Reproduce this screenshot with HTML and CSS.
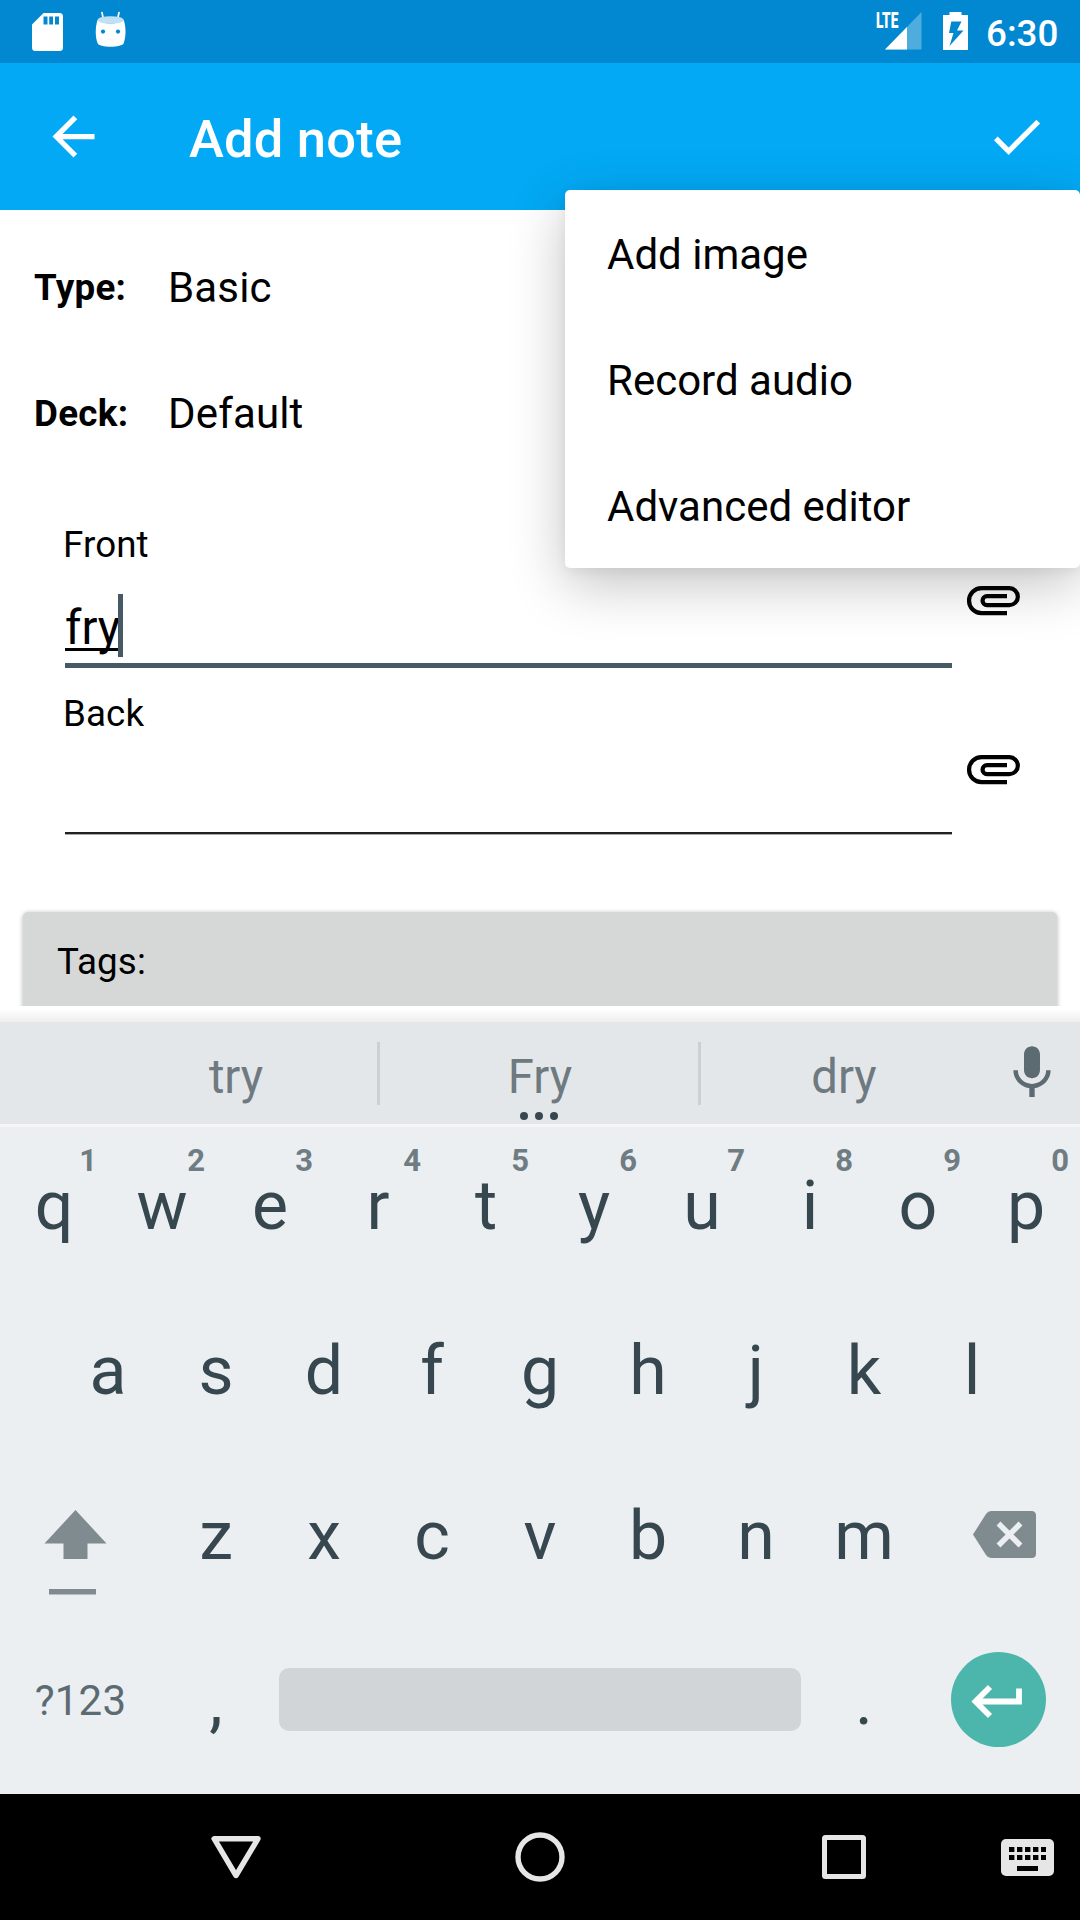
FILE: index.html
```html
<!DOCTYPE html>
<html lang="en">
<head>
<meta charset="utf-8">
<title>Add note</title>
<link rel="stylesheet" href="styles.css">
</head>
<body>
<div class="screen">
  <header class="status">
    <svg class="status-sd" width="31" height="38" viewBox="0 0 31 38"><path fill="#fff" fill-rule="evenodd" d="M11.500 0H27.500a3.500 3.500 0 0 1 3.500 3.500V34.500a3.500 3.500 0 0 1-3.500 3.500H3.500A3.500 3.500 0 0 1 0 34.500V11.500ZM11.500 3.500V11.500H15.500V3.500ZM17.200 3.500V11.500H21V3.500ZM23 3.500V11.500H27V3.500Z"/></svg>
    <svg class="status-droid" width="32" height="38" viewBox="0 0 32 38"><path d="M7 1.500 8.300 8M24 1.500 22.700 8" stroke="#fff" stroke-width="1.700" stroke-linecap="round"/><path fill="#fff" d="M2.500 9C9 13.500 22 13.500 28.800 9C31 16 31.200 25 28.800 32C27.500 37 3.800 37 2.500 32C.1 25 .3 16 2.500 9Z"/><ellipse cx="15.600" cy="9" rx="13" ry="3.800" fill="#c0e1f3"/><circle cx="8" cy="20.600" r="2.100" fill="#0288d1"/><circle cx="23" cy="20.600" r="2.100" fill="#0288d1"/></svg>
    <div class="network">
      <svg width="46" height="38" viewBox="0 0 46 38"><path fill="#4eacdf" d="M45.500 0V37.500H9Z"/><path fill="#fff" d="M31 15V37.500H9Z"/></svg>
      <span class="network-type">LTE</span>
    </div>
    <svg width="25" height="38" viewBox="0 0 25 38"><path fill="#fff" fill-rule="evenodd" d="M6.500 0H18.500V3H25V38H0V3H6.500ZM8.300 9.500 6 21H10.500L6.500 34 20.500 18.500H14L18.500 9.500Z"/></svg>
    <span class="clock">6:30</span>
  </header>
  <div class="appbar">
    <svg width="63" height="63" viewBox="0 0 24 24"><path fill="#fff" d="M20 11H7.830l5.590-5.590L12 4l-8 8 8 8 1.410-1.410L7.830 13H20v-2z"/></svg>
    <h1 class="title">Add note</h1>
    <svg width="63" height="63" viewBox="0 0 24 24"><path fill="#fff" d="M9 16.170 4.830 12l-1.420 1.410L9 19 21 7l-1.410-1.410z"/></svg>
  </div>
  <main class="form">
    <div class="select-row"><b class="select-name">Type:</b><span class="select-value">Basic</span></div>
    <div class="select-row"><b class="select-name">Deck:</b><span class="select-value">Default</span></div>
    <div class="fields">
      <div class="field">
        <div class="field-label">Front</div>
        <div class="field-body">
          <div class="input focused"><span class="typed">fry</span><span class="caret"></span></div>
          <svg class="clip" width="63" height="63" viewBox="0 0 63 63"><path d="M46 44.100H20.500a12.450 12.450 0 0 1 0-24.900H48.400a8.450 8.450 0 0 1 0 16.900H26a4.450 4.450 0 0 1 0-8.900H46"/></svg>
        </div>
      </div>
      <div class="field">
        <div class="field-label">Back</div>
        <div class="field-body">
          <div class="input"></div>
          <svg class="clip" width="63" height="63" viewBox="0 0 63 63"><path d="M46 44.100H20.500a12.450 12.450 0 0 1 0-24.900H48.400a8.450 8.450 0 0 1 0 16.900H26a4.450 4.450 0 0 1 0-8.900H46"/></svg>
        </div>
      </div>
    </div>
    <div class="tags">Tags:</div>
  </main>
  <section class="keyboard">
    <div class="edge"></div>
    <div class="suggestions">
      <span class="word">try</span>
      <span class="word middle">Fry<svg class="more" width="38" height="8" viewBox="0 0 38 8"><g fill="#37474f"><circle cx="4" cy="4" r="4"/><circle cx="19" cy="4" r="4"/><circle cx="34" cy="4" r="4"/></g></svg></span>
      <span class="word">dry</span>
      <svg class="mic" width="64" height="64" viewBox="0 0 24 24"><path fill="#5c6b72" d="M12 14c1.660 0 2.990-1.340 2.990-3L15 5c0-1.660-1.340-3-3-3S9 3.340 9 5v6c0 1.660 1.340 3 3 3zm5.300-3c0 3-2.540 5.100-5.300 5.100S6.700 14 6.700 11H5c0 3.410 2.720 6.230 6 6.720V21h2v-3.280c3.280-.48 6-3.300 6-6.720h-1.700z"/></svg>
    </div>
    <div class="keys">
      <span class="key">q<i class="hint">1</i></span><span class="key">w<i class="hint">2</i></span><span class="key">e<i class="hint">3</i></span><span class="key">r<i class="hint">4</i></span><span class="key">t<i class="hint">5</i></span><span class="key">y<i class="hint">6</i></span><span class="key">u<i class="hint">7</i></span><span class="key">i<i class="hint">8</i></span><span class="key">o<i class="hint">9</i></span><span class="key">p<i class="hint">0</i></span>
    </div>
    <div class="keys">
      <span class="key">a</span><span class="key">s</span><span class="key">d</span><span class="key">f</span><span class="key">g</span><span class="key">h</span><span class="key">j</span><span class="key">k</span><span class="key">l</span>
    </div>
    <div class="keys">
      <span class="key wide"><svg width="162" height="158" viewBox="0 0 162 158"><path fill="#7f8b8f" d="M75.500 53 106.500 86.500H87.500V102H63.500V86.500H44.500ZM49 132H96V137.500H49Z"/></svg></span>
      <span class="key">z</span><span class="key">x</span><span class="key">c</span><span class="key">v</span><span class="key">b</span><span class="key">n</span><span class="key">m</span>
      <span class="key wide"><svg width="162" height="158" viewBox="0 0 162 158"><path fill="#7f8b8f" d="M55 77.500 68 57Q70 54 73 54H113.500Q118 54 118 58.500V96.500Q118 101 113.500 101H73Q70 101 68 98Z"/><path d="M80.500 66.500 102.500 88.500M102.500 66.500 80.500 88.500" stroke="#ebeff2" stroke-width="5.500"/></svg></span>
    </div>
    <div class="keys bottom">
      <span class="key wide symbols">?123</span>
      <span class="key">,</span>
      <span class="space"></span>
      <span class="key">.</span>
      <span class="key wide"><svg class="enter" width="95" height="95" viewBox="0 0 95 95"><circle cx="47.500" cy="47.500" r="47.500" fill="#4db6ac"/><path d="M68 36.500V49.500H25M39 35 24.500 49.500 39 64" fill="none" stroke="#fff" stroke-width="5.800"/></svg></span>
    </div>
  </section>
  <nav class="nav">
    <svg width="304" height="126" viewBox="84 0 304 126"><path d="M214.100 44.700H258L236 81.500Z" fill="none" stroke="#e6e6e6" stroke-width="5.400" stroke-linejoin="round"/></svg>
    <svg width="304" height="126" viewBox="388 0 304 126"><circle cx="540" cy="63" r="22" fill="none" stroke="#e6e6e6" stroke-width="5.400"/></svg>
    <svg width="304" height="126" viewBox="692 0 304 126"><rect x="824.500" y="43.500" width="39" height="39" rx="1" fill="none" stroke="#e6e6e6" stroke-width="5"/></svg>
    <svg width="84" height="126" viewBox="996 0 84 126"><rect x="1001" y="45" width="53" height="37" rx="5" fill="#e6e6e6"/><path d="M1009 53h37v5h-37zM1009 61h37v5h-37zM1017 72h21v5h-21z" fill="#000"/><path d="M1015.700 52v15M1023.700 52v15M1031.700 52v15M1039.700 52v15" stroke="#e6e6e6" stroke-width="2.600"/></svg>
  </nav>
  <div class="menu">
    <div class="menu-item">Add image</div>
    <div class="menu-item">Record audio</div>
    <div class="menu-item">Advanced editor</div>
  </div>
</div>
</body>
</html>
```
FILE: styles.css
```css
* { box-sizing: border-box; }
body { margin: 0; background: #fff; color: #000; font-family: Roboto, "Liberation Sans", sans-serif; }
svg { display: block; flex: none; }
.screen { position: relative; width: 1080px; height: 1920px; overflow: hidden; display: flex; flex-direction: column; }

.status { height: 63px; flex: none; display: flex; align-items: flex-start; padding: 12px 22px 0 32px; background: #0288d1; }
.status-sd { margin-top: 1px; }
.status-droid { margin: -1px auto 0 32px; }
.network { position: relative; margin-right: 21px; }
.network-type { position: absolute; left: 0; top: -4px; color: #fff; font-size: 22px; font-weight: 900; line-height: 26px; transform: scaleX(.62); transform-origin: 0 0; }
.clock { width: 72px; margin-left: 18px; color: #fff; font-size: 36.75px; font-weight: 500; line-height: 43px; white-space: nowrap; }

.appbar { height: 147px; flex: none; display: flex; align-items: center; padding: 0 32px 0 42px; background: #03a9f4; }
.title { flex: 1; margin: 4px 0 0 84px; color: #fff; font-size: 52.5px; font-weight: 500; line-height: 62px; letter-spacing: .2px; }

.form { height: 796px; flex: none; overflow: hidden; padding-top: 14px; }
.select-row { display: flex; align-items: center; height: 126px; padding-left: 34px; }
.select-name { width: 134px; font-size: 36.75px; font-weight: 700; letter-spacing: .3px; }
.select-value { font-size: 42px; letter-spacing: .15px; }
.fields { margin-top: 47px; padding-left: 63px; }
.field-label { height: 43px; font-size: 36.75px; line-height: 43px; letter-spacing: .1px; }
.field-body { display: flex; height: 126px; padding: 3px 0 0 2px; }
.input { display: flex; width: 887px; height: 96px; margin-right: 9px; padding-top: 25px; border-bottom: 2px solid #212121; box-shadow: 0 1px 0 #aaa; }
.input.focused { height: 99px; border-bottom: 5px solid #455a64; box-shadow: none; }
.typed { width: 54px; height: 57px; font-size: 47.25px; line-height: 68px; border-bottom: 3px solid #000; }
.caret { width: 5px; height: 63px; margin-left: -1px; background: #455a64; }
.clip path { fill: none; stroke: #000; stroke-width: 4.2; }
.tags { height: 120px; margin: 51px 23px 0 23px; padding-left: 34px; border-radius: 5px; background: #d6d7d7; box-shadow: 0 1px 5px rgba(0,0,0,.3); font-size: 36.75px; line-height: 100px; letter-spacing: .1px; }

.keyboard { height: 788px; flex: none; background: #ebeff2; }
.edge { height: 16px; background: linear-gradient(#fff 20%, #eee); }
.suggestions { display: flex; height: 105px; padding-left: 95px; background: #e3e7ea; border-bottom: 3px solid #f4f6f8; }
.word { width: 282px; color: #6e7a80; font-size: 47.25px; line-height: 110px; text-align: center; }
.word.middle { position: relative; width: 326px; background: linear-gradient(#cbd0d3, #cbd0d3) 0 20px / 3px 63px no-repeat, linear-gradient(#cbd0d3, #cbd0d3) 321px 20px / 3px 63px no-repeat; }
.more { position: absolute; left: 143px; top: 90px; }
.mic { margin: 19px 0 0 15px; }
.keys { display: flex; justify-content: center; height: 165px; }
.key { position: relative; width: 108px; color: #37474f; font-size: 68px; line-height: 158px; text-align: center; }
.key.wide { width: 162px; }
.hint { position: absolute; top: 19px; right: 11px; color: #6f7c82; font-size: 31px; font-style: normal; font-weight: 700; line-height: 30px; }
.key.symbols { padding-right: 1px; color: #5c6b72; font-size: 42px; letter-spacing: .2px; }
.space { width: 522px; height: 63px; margin: 46px 9px 0; border-radius: 10px; background: #d1d5d8; }
.bottom .wide:last-child { padding: 30px 0 0 33px; }

.nav { display: flex; height: 126px; flex: none; padding-left: 84px; background: #000; }

.menu { position: absolute; left: 565px; top: 190px; width: 515px; height: 378px; border-radius: 5px; background: #fff; box-shadow: 0 16px 56px rgba(0,0,0,.24), 0 4px 12px rgba(0,0,0,.05); }
.menu-item { height: 126px; padding-left: 42px; font-size: 42px; line-height: 129px; }
```
